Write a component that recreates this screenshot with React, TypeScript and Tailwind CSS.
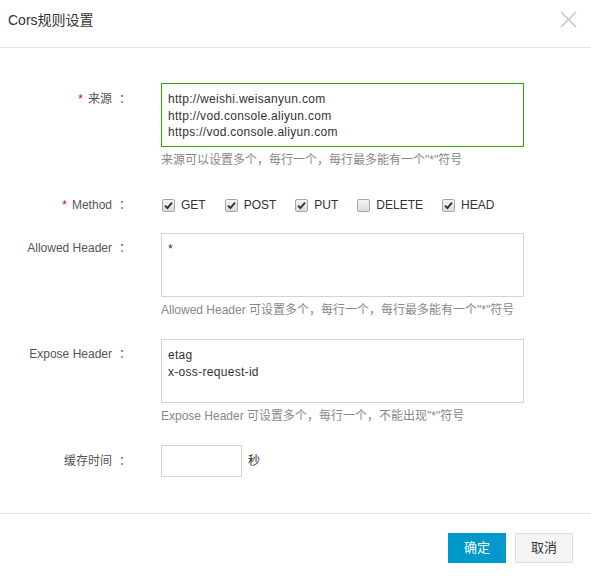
import React from "react";

const font = { fontFamily: '"Liberation Sans", "Noto Sans CJK SC", sans-serif' };

function Check({ checked, label }: { checked: boolean; label: string }) {
  return (
    <label className="flex items-center gap-[6px]">
      <span className="flex h-[13px] w-[13px] items-center justify-center rounded-[2px] border border-[#a6a6a6] bg-gradient-to-b from-[#f4f4f4] to-[#dcdcdc]">
        {checked && (
          <svg width="9" height="9" viewBox="0 0 9 9">
            <path d="M1 4.6 L3.4 7 L8 1.6" fill="none" stroke="#333" strokeWidth="1.9" />
          </svg>
        )}
      </span>
      <span className="text-[12px] text-[#333]">{label}</span>
    </label>
  );
}

function Label({ text, required }: { text: string; required?: boolean }) {
  return (
    <div className="w-[131px] shrink-0 text-right text-[12px] leading-[16px] text-[#555]">
      {required && <span className="mr-[5px] text-[#e00]">*</span>}
      {text}
      <span className="ml-[7px]">：</span>
    </div>
  );
}

function Area({ value, green }: { value: string; green?: boolean }) {
  return (
    <textarea
      readOnly
      value={value}
      className={`block h-[64px] w-[363px] resize-none border bg-white px-[6px] pt-[7px] text-[12px] leading-[16.5px] tracking-[0.3px] text-[#333] outline-none ${
        green ? "border-[#2ea600]" : "border-[#d4d4d4]"
      }`}
    />
  );
}

function Help({ text }: { text: string }) {
  return <div className="mt-[5px] text-[12px] leading-[16px] text-[#888]">{text}</div>;
}

export default function App() {
  return (
    <div style={font} className="h-[576px] w-[591px] bg-white">
      <div className="flex h-[48px] items-center justify-between border-b border-[#e5e5e5] pl-[8px] pr-[14px]">
        <h2 className="pb-[7px] text-[14px] text-[#333]">Cors规则设置</h2>
        <svg width="17" height="17" viewBox="0 0 17 17" className="mb-[8px]">
          <path d="M1 1 L16 16 M16 1 L1 16" stroke="#c8c8c8" strokeWidth="1.6" />
        </svg>
      </div>

      <div className="pt-[35px]">
        <div className="flex">
          <div className="pt-[8px]">
            <Label text="来源" required />
          </div>
          <div className="ml-[30px]">
            <Area
              green
              value={"http://weishi.weisanyun.com\nhttp://vod.console.aliyun.com\nhttps://vod.console.aliyun.com"}
            />
            <Help text={'来源可以设置多个，每行一个，每行最多能有一个"*"符号'} />
          </div>
        </div>

        <div className="mt-[27px] flex h-[20px] items-center">
          <Label text="Method" required />
          <div className="ml-[31px] flex items-center gap-[19px]">
            <Check checked label="GET" />
            <Check checked label="POST" />
            <Check checked label="PUT" />
            <Check checked={false} label="DELETE" />
            <Check checked label="HEAD" />
          </div>
        </div>

        <div className="mt-[18px] flex">
          <div className="pt-[7px]">
            <Label text="Allowed Header" />
          </div>
          <div className="ml-[30px]">
            <Area value="*" />
            <Help text={'Allowed Header 可设置多个，每行一个，每行最多能有一个"*"符号'} />
          </div>
        </div>

        <div className="mt-[21px] flex">
          <div className="pt-[7px]">
            <Label text="Expose Header" />
          </div>
          <div className="ml-[30px]">
            <Area value={"etag\nx-oss-request-id"} />
            <Help text={'Expose Header 可设置多个，每行一个，不能出现"*"符号'} />
          </div>
        </div>

        <div className="mt-[21px] flex items-center">
          <Label text="缓存时间" />
          <div className="ml-[30px] flex items-center">
            <input readOnly className="h-[32px] w-[81px] border border-[#d4d4d4] outline-none" />
            <span className="ml-[6px] text-[12px] text-[#333]">秒</span>
          </div>
        </div>
      </div>

      <div className="mt-[36px] flex justify-end gap-[9px] border-t border-[#e5e5e5] pr-[18px] pt-[19px]">
        <button className="h-[30px] w-[58px] bg-[#0099cc] text-[13px] text-white">确定</button>
        <button className="h-[30px] w-[58px] border border-[#dcdcdc] bg-[#f5f5f5] text-[13px] text-[#333]">取消</button>
      </div>
    </div>
  );
}
